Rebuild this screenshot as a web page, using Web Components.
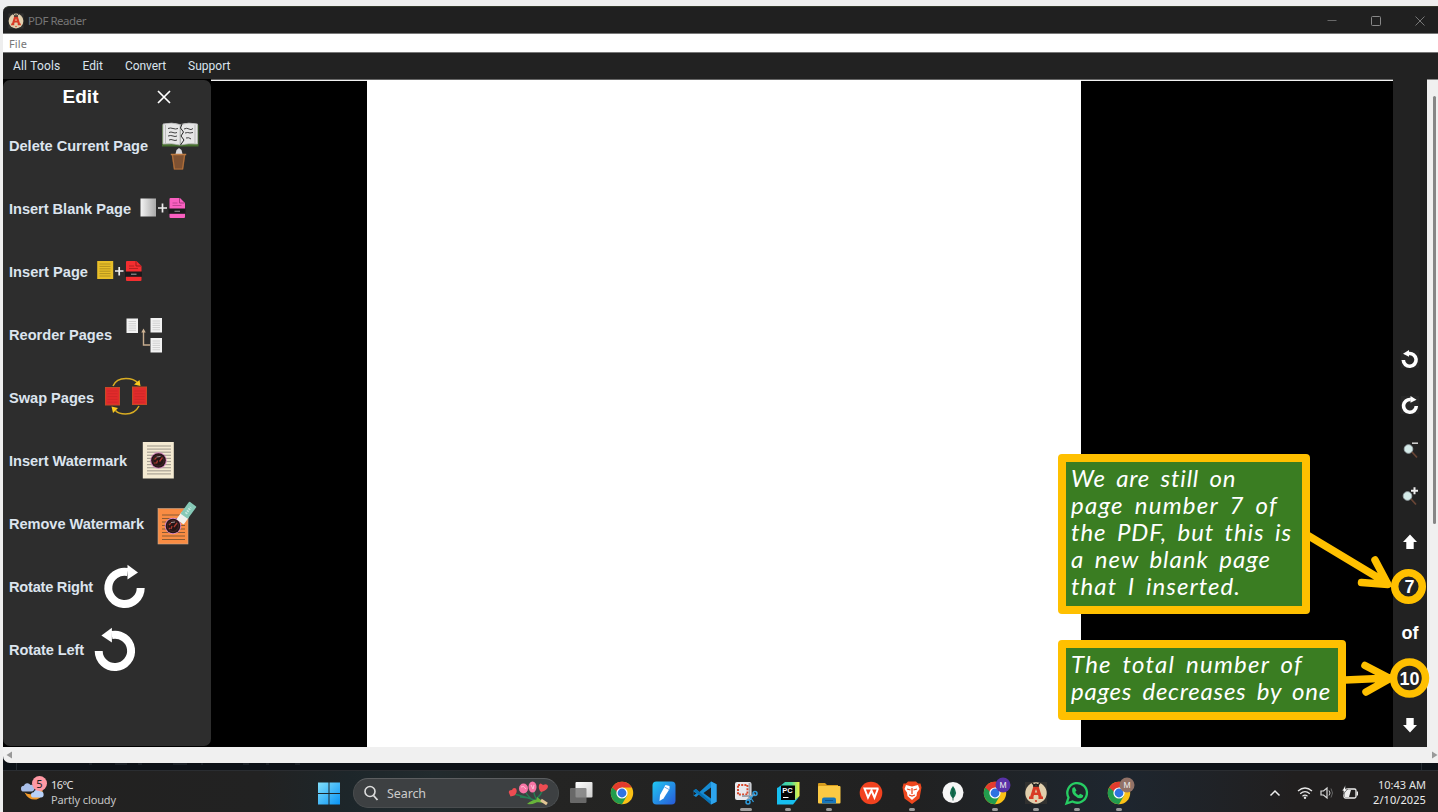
<!DOCTYPE html>
<html lang="en">
<head>
<meta charset="utf-8">
<title>PDF Reader</title>
<style>
html,body{margin:0;height:100%;overflow:hidden;background:#eee}
body{font-family:"Noto Sans","Open Sans",sans-serif}
</style>
</head>
<body>
<desktop-screen></desktop-screen>
<script>
const pageDoc = (x, f, lines) => `<rect x="${x}" y="20" width="16" height="18" fill="${f}"/>${lines}`;
const pdfDoc = (x, f, d) => `<path d="M${x+1} 20h9.500l5 5v14q0 1-1 1h-13.500q-1 0-1-1v-18q0-1 1-1z" fill="${f}"/><path d="M${x+10} 20v5h5" fill="none" stroke="${d}"/><path d="M${x+3} 25h5M${x+3} 27.500h9" stroke="${d}" stroke-width=".7"/><rect x="${x-1}" y="30.500" width="17" height="5.300" fill="#1b1a1c"/><path d="M${x+5} 33.200h5.500" stroke="#999" stroke-width="1.100"/>`;
const hl = (x, y, w, n, s, c, k=1) => Array.from({length:n},(_,i)=>`<path d="M${x} ${y+i*s}h${w}" stroke="${c}" stroke-width="${k}"/>`).join('');
const seal = (x, y) => `<circle cx="${x}" cy="${y}" r="8.300" fill="#d887c0"/><circle cx="${x}" cy="${y}" r="7.300" fill="#241516"/><circle cx="${x}" cy="${y}" r="5.500" fill="none" stroke="#4c2b2b" stroke-width=".8"/><path d="M${x-4} ${y-1}l2-2M${x-2} ${y+3}l1-3M${x+1} ${y+1}l3-4M${x-4} ${y+3}l1-1" stroke="#ae3a30" stroke-width="1.300" fill="none"/><path d="M${x-2} ${y-3.500}l4-.5" stroke="#a99"/>`;
const chrome = `<g transform="translate(21 23)"><circle r="11.200" fill="#fbc116"/><path d="M-9.700-5.600A11.200 11.200 0 0 0 0 11.200L4.900 2.800 0 0z" fill="#229c4d"/><path d="M-9.700-5.600L-4.900 2.800 0 0 0-5.600z" fill="#229c4d"/><path d="M-9.700-5.600A11.200 11.200 0 0 1 9.700-5.600H0L-4.600-1z" fill="#e33b2e"/><circle r="5.600" fill="#fff"/><circle r="4.400" fill="#2f73e2"/></g>`;
const aLogo = (s) => `<g transform="scale(${s})"><rect x="-11" y="-11" width="22" height="22" fill="#30302f"/><circle r="10.700" fill="#e1cfad"/><path d="M-7 6v-2.500h1.200L-2.500-7h5L5.800 3.500H7V6H2.500V3.500L2 2h-4L-2.500 3.500V6z" fill="#d83a25"/><path d="M-1.200-.5L0-4 1.200-.5z" fill="#e1cfad"/><path d="M-4-10l2 2L0-9l2 1L4-10M-3-7h6" stroke="#222" stroke-width="1.400" fill="none"/><circle cy="8" r="1.100" fill="#d83a25"/></g>`;
const dot = `<rect x="18" y="38" width="6" height="3" rx="1.500" fill="#9b9b9b"/>`;
const who = (c) => `<circle cx="29" cy="15" r="7.500" fill="${c}"/><text x="29" y="18" text-anchor="middle" font-family="Liberation Sans" font-size="8.500" fill="#eee">M</text>`;
const cloud = (x,y,s,c) => `<path transform="translate(${x} ${y}) scale(${s})" d="M3 9a3 3 0 0 1 0-6A4 4 0 0 1 10 2a3.500 3.500 0 0 1 1 7z" fill="${c}"/>`;

/* name: [width, height, markup] */
const ICONS = {
 del:[48,63,`<path d="M0 10h36.500v21.500H0z" fill="#47702f"/><path d="M1 9q9-2 17 .5v20.500q-8-2-17-1zM35.500 9q-9-2-17 .5v20.500q8-2 17-1z" fill="#e6e6e6" stroke="#b5b5b5" stroke-width=".8"/><path d="M3.500 10v18.500M33 10v18.500" stroke="#bbb"/><path d="M6 13.500q2.500-1 5 0t5 0M7 17.500q2-1 4 0t4 0M6 21q3-1 5 0t4 0M7 25q2-1 4 0t4 0M22 14q3-1.500 5 0t4-.5M23 18q3-1 5 0l3-.5M24 23q3-1 5 1" fill="none" stroke="#444" stroke-width="1"/><path d="M20 9l-1.500 4 3 4-2.500 4 3 4-3.500 5" stroke="#222" fill="none"/><path d="M13.500 39l1-4 2.500-2 2.500 2 1 4z" fill="#d7d7db"/><path d="M9.500 39h14l-2.200 15.500h-9.600z" fill="#7f5232"/><path d="M8.800 39.500h15.400" stroke="#bd7b43" stroke-width="1.500"/><path d="M10.500 40l2 14h8l2-14" stroke="#b06f39" stroke-width="1.200" fill="none"/>`],
 blank:[48,63,`<defs><linearGradient id="g"><stop stop-color="#f4f4f4"/><stop offset="1" stop-color="#a8a8a8"/></linearGradient></defs><rect x=".5" y="20.500" width="15.500" height="18" fill="url(#g)"/><path d="M18 30h9M22.500 25.500v9" stroke="#eee" stroke-width="1.700"/>${pdfDoc(29.5,'#f95fc0','#a83a80')}`],
 page:[48,63,`${pageDoc(.2,'#e8be28',hl(2.5,23,11,6,2.4,'#a5851c',.8))}<path d="M18 30h8.500M22.200 26v8.500" stroke="#eee" stroke-width="1.700"/>${pdfDoc(29,'#f42e30','#9d1a1a')}`],
 reorder:[48,63,[[.5,14.5],[24.5,14],[24.5,34]].map(([x,y])=>`<rect x="${x}" y="${y}" width="11.500" height="14.500" fill="#f2f2f2"/>${hl(x+2,y+3,7.5,5,2.2,'#d0d0d0')}`).join('')+`<path d="M24 41h-6.500v-13" stroke="#c5ab8d" stroke-width="1.400" fill="none"/><path d="M15.300 28.500l2.200-4 2.200 4z" fill="#d0b595"/>`],
 swap:[48,63,`<rect x="1.500" y="20.500" width="14" height="17.500" fill="#e22b2b" stroke="#c74a25"/><rect x="28.500" y="20" width="14" height="17.500" fill="#e22b2b" stroke="#c74a25"/>${hl(3.5,24,10,5,2.8,'#c92626',.7)}${hl(30.5,24,10,5,2.8,'#c92626',.7)}<path d="M9 19q3-7.500 13-7.500 8 0 12 4.500M35 39q-4 8-13.500 8-7 0-10-3.500" fill="none" stroke="#d8ac22" stroke-width="1.500"/><path d="M36.500 19l-6.500-1.500 5.500-4.500zM7.500 39.500l6.500 1.500-5 5z" fill="#fbc91f"/>`],
 mark:[48,63,`<rect x=".8" y="12" width="31" height="36.500" fill="#f4ead2"/>${hl(5,16,24,10,3.1,'#aaa395',1.2)}${seal(16.5,30.5)}`],
 unmark:[48,63,`<rect x="1" y="15.500" width="30" height="35.500" fill="#f98c43" stroke="#c9a98e" stroke-width=".6"/>${hl(5,22,23,8,3.5,'#8a5a34',1.2)}${seal(16,33)}<g transform="translate(29.500 20) rotate(-54)"><rect x="-11" y="-4.500" width="9" height="9" rx="1" fill="#f1f1ed"/><rect x="-4" y="-4.500" width="15" height="9" rx="1" fill="#86c9b7"/><path d="M-1 0h8" stroke="#c8e9df" stroke-width="2.500" stroke-dasharray="1.500 1"/></g>`],
 right:[48,63,`<path d="M36.700 32a16.200 16.200 0 1 1-13-16" fill="none" stroke="#fff" stroke-width="8"/><path d="M23.500 8.800L34 16.500l-10.500 7z" fill="#fff"/>`],
 left:[48,63,`<path d="M3.700 32a16.200 16.200 0 1 0 13-16" fill="none" stroke="#fff" stroke-width="8"/><path d="M16.900 8.800L6.400 16.500l10.500 7z" fill="#fff"/>`],
 sleft:[34,46,`<rect x="8" y="14" width="18" height="18" fill="#282828"/><path d="M10.300 24a6.400 6.400 0 1 0 5.500-6.500" fill="none" stroke="#fff" stroke-width="3.600"/><path d="M16 14l-6 3.800 6 3z" fill="#fff"/>`],
 sright:[34,46,`<rect x="8" y="14" width="18" height="18" fill="#282828"/><path d="M23.300 24a6.400 6.400 0 1 1-5.500-6.500" fill="none" stroke="#fff" stroke-width="3.600"/><path d="M17.500 14l6 3.800-6 3z" fill="#fff"/>`],
 zout:[34,46,`<path d="M19 25l5 5.500" stroke="#694636" stroke-width="1.700"/><circle cx="15.500" cy="22" r="4.300" fill="#d5ebe9" stroke="#a3afb3" stroke-width=".9"/><path d="M19 16.200h6" stroke="#ccc" stroke-width="1.600"/>`],
 zin:[34,46,`<path d="M18 26l5 5.500" stroke="#694636" stroke-width="1.700"/><circle cx="14.500" cy="23" r="4.300" fill="#d5ebe9" stroke="#a3afb3" stroke-width=".9"/><path d="M18 17.700h7M21.500 14.200v7" stroke="#eee" stroke-width="2"/>`],
 up:[34,46,`<path d="M17 15.500l7 7.500h-3.300v7h-7.400v-7H10z" fill="#fff"/>`],
 down:[34,46,`<path d="M17 30.500l7-7.500h-3.300v-7h-7.400v7H10z" fill="#fff"/>`],
 x:[14,14,`<path d="M1 1l12 12M13 1L1 13" stroke="#fff" stroke-width="1.700"/>`],
 app:[16,16,`<g transform="translate(8 8)">${aLogo(.69)}</g>`],
 wmin:[12,12,`<path d="M1.500 5.500h9" stroke="#686868"/>`],
 wmax:[12,12,`<rect x="1.500" y="1.500" width="9" height="9" rx="1" fill="none" stroke="#888"/>`],
 wx:[12,12,`<path d="M1.500 1.500l9 9M10.500 1.500l-9 9" stroke="#777"/>`],
 weather:[30,42,`${cloud(3,13,.95,'#aabfe9')}<path d="M22 15q0 7-7 9-5 1-8.500-1.500 4 8 12 7 7-2 6-10z" fill="#f39a2b"/>${cloud(13,19.5,.9,'#b9d2fa')}<circle cx="21.500" cy="13.500" r="7.500" fill="#ff99a4"/><text x="21.500" y="17.500" text-anchor="middle" font-size="11" font-family="Noto Sans" fill="#222">5</text>`],
 start:[24,42,`<defs><linearGradient id="w" gradientUnits="userSpaceOnUse" x1="1" y1="12" x2="23" y2="34"><stop stop-color="#83e0fb"/><stop offset="1" stop-color="#0a94f5"/></linearGradient></defs><path d="M1 12.500h10.500v10.500H1zM12.500 12.500H23v10.500H12.500zM1 24h10.500V34.500H1zM12.500 24H23V34.500H12.500z" fill="url(#w)"/>`],
 search:[16,16,`<circle cx="7" cy="6.500" r="5" fill="none" stroke="#ddd" stroke-width="1.600"/><path d="M10.500 10.500l4 4.500" stroke="#ddd" stroke-width="1.800"/>`],
 tulips:[42,28,`<path d="M6 15q12 3 20 6l10 2M16 11q5 8 10 11M26 10q-1 6 4 12M35 10q-2 6-6 9M12 18l10 1" stroke="#257d53" stroke-width="1.400" fill="none"/><path d="M19 25q7-6 13-4-5 5-13 4zM29 18l8 6-9-1z" fill="#68b43a"/><path d="M33 21l6 4" stroke="#e2c493" stroke-width="3"/><path d="M1 14q-1-3 3-3 1-3 4-1.500 2 3.500-1.500 7l-4 1zM31 6q1-3 4 0 4-2 5 1 0 4-7 6-3-3-2-7z" fill="#ed4c52"/><ellipse cx="15.500" cy="9.500" rx="4.500" ry="5" fill="#f774a5"/><ellipse cx="24.500" cy="8" rx="4" ry="5.500" fill="#f774a5"/><path d="M13 8q3-2 5 2M23 6l2 4 1-4" stroke="#ffc0d4" fill="none"/>`],
 task:[42,42,`<defs><linearGradient id="t" y2="1"><stop stop-color="#fff"/><stop offset="1" stop-color="#cecece"/></linearGradient></defs><rect x="15.500" y="12" width="17" height="15.500" rx="1" fill="url(#t)"/><rect x="10" y="18" width="16.500" height="15" rx="1" fill="#777" opacity=".82"/>`],
 chrome:[42,42,chrome],
 pen:[42,42,`<defs><linearGradient id="p" y2="1"><stop stop-color="#20c8f3"/><stop offset="1" stop-color="#2859d8"/></linearGradient></defs><rect x="9.500" y="11.500" width="23" height="23" rx="4" fill="url(#p)"/><path d="M17 25l5.500-10 4 1 0 3-6 9.500-4 2.500z" fill="#fff"/><path d="M21.500 17l4.500 2.500" stroke="#70a8e8"/>`],
 code:[42,42,`<path d="M27 11.500l5.500 2.700v17.600L27 34.500 15.500 24 12 27l-2.500-1.500v-5L12 19l3.500 3z" fill="#168bd2"/><path d="M27 17.500v11L19.500 23zM9.500 21.500l3 2-3 2z" fill="#202020"/><path d="M9.500 20.500L12 19l15 12.500V34.500L24 32z" fill="#0872b5"/><path d="M27 11.500l5.500 2.700v17.600L27 34.500z" fill="#2da4ed"/>`],
 snip:[42,42,`<rect x="10" y="12" width="16.500" height="18" rx="2" fill="#e8e9ed"/><rect x="13" y="15" width="9.500" height="9.500" fill="none" stroke="#d8492c" stroke-width="2" stroke-dasharray="2 1.200"/><path d="M24.500 13v14l-2 3M17 26h9l4-2" stroke="#9fa4ac" stroke-width="1.800" fill="none"/><circle cx="23" cy="32" r="2" fill="none" stroke="#2e9cdc" stroke-width="1.500"/><circle cx="30" cy="23.500" r="2" fill="none" stroke="#2e9cdc" stroke-width="1.500"/><path d="M24 30l4-4M24.500 26l4 6" stroke="#2e9cdc" stroke-width="1.300"/><rect x="15" y="38" width="12" height="3" rx="1.500" fill="#9b9b9b"/>`],
 pc:[42,42,`<defs><linearGradient id="pc" x2="1"><stop stop-color="#27c7cb"/><stop offset=".6" stop-color="#56dc92"/><stop offset="1" stop-color="#eff344"/></linearGradient></defs><path d="M18 12h14.500v14l-6 6H12V17z" fill="url(#pc)"/><path d="M10 18l4-2v14h14l4-3-6 7.500H10z" fill="#16bff0"/><rect x="14" y="15.500" width="14" height="14.500" fill="#050505"/><text x="15.300" y="22.500" font-size="7.500" font-weight="bold" font-family="Liberation Sans" fill="#fff">PC</text><path d="M16 27.500h5.500" stroke="#fff"/>${dot}`],
 folder:[42,42,`<path d="M10 14q0-1 1-1h6l2 2h11v5H10z" fill="#d79c1d"/><rect x="10" y="16" width="22.500" height="17.500" rx="1" fill="#fbc944"/><path d="M14 33.500v-4q0-2 2-2h10q2 0 2 2v4z" fill="#1776bc"/><path d="M17 30.500h8" stroke="#10538b"/>${dot}`],
 wps:[42,42,`<circle cx="21" cy="23" r="11.300" fill="#f2421f"/><path d="M28.500 18.500h-14l3.500 9 3.500-7 3 7 3.500-9" fill="none" stroke="#fff" stroke-width="2"/>`],
 brave:[42,42,`<path d="M17 11.500h8l2 2 2.500 0 1 4-2 11-7.500 5.500-7.500-5.500-2-11 1-4h2.500z" fill="#ef481f"/><path d="M15 15l6 1.500 6-1.500 1.500 4-2.500 3.500-.5 3.500-4.500 4-4.500-4-.5-3.500-2.500-3.500z" fill="#fff"/><path d="M16 19l3.500 1M26 19l-3.500 1M21 18v6M18 25l3 1 3-1" stroke="#ef481f" stroke-width="1.300" fill="none"/>${dot}`],
 mongo:[42,42,`<circle cx="21" cy="22.500" r="10.500" fill="#f6f6f6"/><path d="M21 16q6 7 0 12.500-6-5.500 0-12.500z" fill="#157052"/><path d="M21 18v12.500" stroke="#0b4f38" stroke-width=".8"/>`],
 cm1:[42,42,chrome+who('#5932a8')+dot], a:[42,42,`<g transform="translate(21 23)">${aLogo(1)}</g>${dot}`],
 wa:[42,42,`<path d="M10.500 33.500l2-6a9.800 9.800 0 1 1 4 4z" fill="none" stroke="#27cd63" stroke-width="2.300"/><path d="M16.500 18l2-1 2 3.500-1.300 1.500q1.300 2.500 3.500 3.300l1.500-1.500 3 1.500q0 3-3 3-3 0-6-3t-1.700-7.300z" fill="#27cd63"/>${dot}`],
 cm2:[42,42,chrome+who('#927267')+dot],
 chev:[16,16,`<path d="M3.500 10.500L8 6l4.500 4.500" fill="none" stroke="#eee" stroke-width="1.500"/>`],
 wifi:[16,16,`<path d="M1 6q7-6 14 0M3.200 8.700q4.800-4 9.600 0M5.500 11.200q2.500-2 5 0" fill="none" stroke="#e8e8e8" stroke-width="1.300"/><circle cx="8" cy="12.700" r="1.200" fill="#e8e8e8"/>`],
 vol:[16,16,`<path d="M2 6h2.500L8 3v10L4.500 10H2z" fill="none" stroke="#ddd" stroke-width="1.200"/><path d="M10 5.500q2 2.500 0 5" fill="none" stroke="#ccc"/><path d="M12 3.500q3 4.500 0 9" fill="none" stroke="#666"/>`],
 bat:[18,16,`<rect x="3" y="4" width="12" height="9" rx="1.500" fill="none" stroke="#eee" stroke-width="1.300"/><path d="M4 5h6l-2 7H4z" fill="#eee"/><path d="M16.300 6.500v4" stroke="#eee" stroke-width="1.400"/><path d="M4.500 0L1 6h2l-1 3.500L6.500 4h-2z" fill="#fff" stroke="#222" stroke-width=".6"/>`]
};

const make = (name, css, html) => customElements.define(name, class extends HTMLElement {
  connectedCallback(){
    if (this.shadowRoot) return;
    const t = document.createElement('template');
    t.innerHTML = `<style>${css}</style>${typeof html === 'function' ? html(this) : html}`;
    this.attachShadow({mode:'open'}).append(document.importNode(t.content, true));
  }
});

make('app-icon', `:host{display:block;flex:none}svg{display:block;overflow:visible}`, el => {
  const [w,h,m] = ICONS[el.getAttribute('name')];
  return `<svg width="${w}" height="${h}" viewBox="0 0 ${w} ${h}">${m}</svg>`;
});

make('title-bar', `:host{display:flex;align-items:center;height:28px;background:#202020;border-top:1px solid #33382a;border-bottom:1px solid #777;box-sizing:border-box;padding:1px 12px 0 5px;color:#757575;font-size:11.500px;border-radius:6px 0 0 0}
 fit-text{margin-left:4px;flex:1}.w{display:flex;gap:32px}`,
 `<app-icon name="app"></app-icon><fit-text w="58">PDF Reader</fit-text><div class="w"><app-icon name="wmin"></app-icon><app-icon name="wmax"></app-icon><app-icon name="wx"></app-icon></div>`);

make('menu-bar', `:host{display:flex;align-items:center;height:19px;background:#fff;border-bottom:1px solid #777;box-sizing:border-box;padding-left:6px;color:#777;font-size:11px}`,
 `<fit-text w="18">File</fit-text>`);

make('tool-bar', `:host{display:flex;align-items:center;height:26px;background:#222;padding-left:10px;gap:22px;font:12px Roboto,sans-serif;color:#dce4ee;box-sizing:border-box}`,
 `<fit-text w="47.500">All Tools</fit-text><fit-text w="20.500">Edit</fit-text><fit-text w="41">Convert</fit-text><fit-text w="42.500">Support</fit-text>`);

make('side-item', `:host{display:flex;height:63px;align-items:center;padding-left:6px;font:bold 14.600px/18px "Liberation Sans",sans-serif;color:#dce4ee}app-icon{margin-top:2px}`,
 el => `<fit-text w="${el.getAttribute('w')}">${el.getAttribute('label')}</fit-text><app-icon name="${el.getAttribute('icon')}" style="margin-left:${el.getAttribute('gap')}px"></app-icon>`);

make('edit-panel', `:host{display:block;width:208px;height:666px;margin-top:1px;background:#2d2d2d;border-radius:7px;flex:none;overflow:hidden}
 header{display:flex;height:34px;align-items:center;padding-left:59.500px;font:bold 19px "Liberation Sans",sans-serif;color:#fff;gap:58.500px}`,
 `<header><fit-text w="36">Edit</fit-text><app-icon name="x"></app-icon></header>` +
 [['Delete Current Page',139,14,'del'],['Insert Blank Page',122,9,'blank'],['Insert Page',79,9,'page'],['Reorder Pages',103,14,'reorder'],['Swap Pages',85,10,'swap'],['Insert Watermark',118,15,'mark'],['Remove Watermark',135,13,'unmark'],['Rotate Right',84,11,'right'],['Rotate Left',75,11,'left']]
 .map(([l,w,g,i])=>`<side-item label="${l}" w="${w}" gap="${g}" icon="${i}"></side-item>`).join(''));

make('page-view', `:host{display:flex;flex:1;background:#000;border-top:1px solid #666;box-sizing:border-box;padding-left:156px;box-shadow:inset 0 1px #f2f2f2}div{width:714px;background:#fff}`, `<div></div>`);

make('page-rail', `:host{display:flex;flex-direction:column;justify-content:flex-end;width:34px;background:#222;color:#fff;font:bold 18px "Liberation Sans",sans-serif}
 div{height:45.780px;display:flex;align-items:center;justify-content:center;box-sizing:border-box;padding-top:1.500px}.n{padding-right:1px}`,
 ['sleft','sright','zout','zin','up'].map(i=>`<div><app-icon name="${i}"></app-icon></div>`).join('')+`<div class="n">7</div><div>of</div><div class="n">10</div><div><app-icon name="down"></app-icon></div>`);

make('scroll-v', `:host{display:block;width:11px;background:#f0f0f0;border-top:1px solid #888;box-sizing:border-box;padding:16px 0 0 6px}div{width:3px;height:428px;background:#868686;border-radius:2px}`, `<div></div>`);
make('scroll-h', `:host{display:flex;justify-content:space-between;align-items:center;height:16px;background:#f0f0f0;padding-left:3px;border-radius:0 0 0 7px}svg{display:block}`,
 `<svg width="7" height="8"><path d="M6 .5v7L.5 4z" fill="#999"/></svg><svg width="7" height="8"><path d="M1 .5v7L6.500 4z" fill="#999"/></svg>`);

make('task-bar', `:host{display:flex;height:42px;background:linear-gradient(90deg,#222120,#222 18%,#1d262a 24%,#222b2e 30%,#242423 38%,#212121 63%,#1e262f 78%,#211f1f 90%);box-shadow:inset 0 1px #2a2d31;color:#e4e4e4;font-size:11px;line-height:15px;box-sizing:border-box;padding-left:15px}
 .w{width:285px;display:flex}.c{padding:7px 0 0 3px;display:flex;flex-direction:column}.c fit-text:last-child{color:#c5c5c5}
 .start{margin-left:14px;width:36px}.s{width:206px;height:30px;margin-top:8px;box-sizing:border-box;border-radius:15px;background:#3d4042;border:1px solid #4a4d4f;border-top-color:#5c5e60;display:flex;align-items:center;padding:0 8px 0 9px;font-size:12.500px;color:#ccc}
 .s fit-text{margin-left:8px;flex:1}.apps{display:flex;margin-left:1px}.apps div{width:41.370px}
 .tray{display:flex;margin-left:auto;align-items:center;padding:4px 12px 0 0}.tray .c{padding:0 0 3px 14px;align-items:flex-end}.tray .c fit-text:last-child{color:#eee}`,
 `<div class="w"><app-icon name="weather"></app-icon><div class="c"><fit-text w="22">16°C</fit-text><fit-text w="65">Partly cloudy</fit-text></div></div>
 <div class="start"><app-icon name="start"></app-icon></div>
 <div class="s"><app-icon name="search"></app-icon><fit-text w="39">Search</fit-text><app-icon name="tulips"></app-icon></div>
 <div class="apps">${['task','chrome','pen','code','snip','pc','folder','wps','brave','mongo','cm1','a','wa','cm2'].map(i=>`<div><app-icon name="${i}"></app-icon></div>`).join('')}</div>
 <div class="tray"><app-icon name="chev" style="margin-right:14px"></app-icon><app-icon name="wifi" style="margin-right:6px"></app-icon><app-icon name="vol" style="margin-right:6px"></app-icon><app-icon name="bat"></app-icon><div class="c"><fit-text w="48">10:43 AM</fit-text><fit-text w="53">2/10/2025</fit-text></div></div>`);

make('note-box', `:host{display:block;position:absolute;box-sizing:border-box;border:8px solid #ffc000;border-radius:4px;background:#ffc000;font:italic 24px/27px "Segoe Print",Lato,sans-serif;word-spacing:4px;color:#fff}
 div{background:#3a7d22;height:100%;padding:2px 0 0 5px;box-sizing:border-box}`, `<div><slot></slot></div>`);

make('callout-layer', `:host{position:absolute;inset:0;pointer-events:none}svg{position:absolute;inset:0}
 .a{left:1058px;top:454px;width:252px;height:160px}.b{left:1058px;top:640px;width:288px;height:80px}`,
 `<svg width="1438" height="812" fill="none" stroke="#ffc000" stroke-width="7.500" stroke-linecap="round" stroke-linejoin="round"><path d="M1308 535.500L1387 583M1375 560L1388 584.500L1361.500 582.500M1345 680L1390 678M1365 665.500L1390 678.500L1366 692"/><circle cx="1408.500" cy="586.500" r="13.800"/><circle cx="1409.500" cy="678" r="16"/></svg>
 <note-box class="a"><fit-text w="165">We are still on</fit-text><fit-text w="207">page number 7 of</fit-text><fit-text w="221">the PDF, but this is</fit-text><fit-text w="200">a new blank page</fit-text><fit-text w="170">that I inserted.</fit-text></note-box>
 <note-box class="b"><fit-text w="232">The total number of</fit-text><fit-text w="260">pages decreases by one</fit-text></note-box>`);

make('desktop-screen', `:host{display:block;position:relative;width:1438px;height:812px;box-sizing:border-box;padding:6px 0 0 3px;background:#eee;overflow:hidden}
 .m{display:flex;height:668px;background:#000}.g{height:7px;background:#0d1218;overflow:hidden}.g svg{display:block}.h{background:#0d1218}`,
 `<title-bar></title-bar><menu-bar></menu-bar><tool-bar></tool-bar>
 <div class="m"><edit-panel></edit-panel><page-view></page-view><page-rail></page-rail><scroll-v></scroll-v></div>
 <div class="h"><scroll-h></scroll-h></div>
 <div class="g"><svg width="1435" height="7"><path d="M13.500 0v7M1418.500 0v7" stroke="#252b31"/><path d="M86 1h3M112 1h12M135 1h4M170 1h14M198 1h2M240 1h6M263 1h3M292 1h5" stroke="#2b3138" stroke-width="1"/></svg></div>
 <task-bar></task-bar><callout-layer></callout-layer>`);

/* Text whose tracking is set so that it fills its "w" width */
customElements.define('fit-text', class extends HTMLElement {
  connectedCallback(){
    if (!this.shadowRoot) this.attachShadow({mode:'open'}).innerHTML = `<style>:host{display:block;white-space:nowrap}span{display:inline-block}</style><span><slot></slot></span>`;
    const s = this.shadowRoot.querySelector('span');
    s.style.letterSpacing = '0';
    const w = s.getBoundingClientRect().width;
    s.style.letterSpacing = (this.getAttribute('w') - w) / this.textContent.trim().length + 'px';
  }
});
</script>
</body>
</html>
